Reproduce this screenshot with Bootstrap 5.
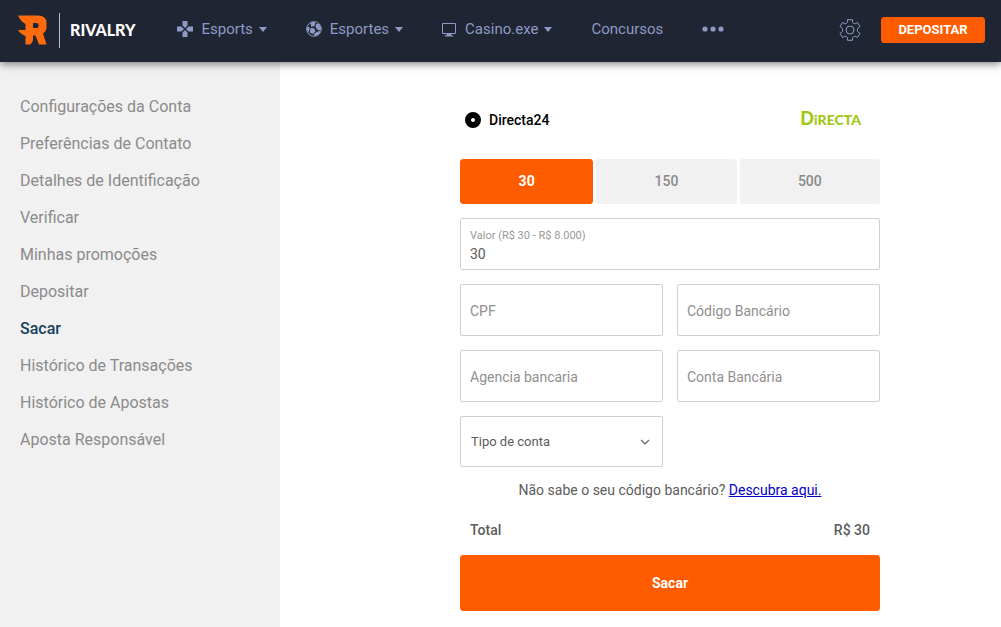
<!DOCTYPE html>
<html lang="pt-BR">
<head>
<meta charset="utf-8">
<meta name="viewport" content="width=device-width, initial-scale=1">
<title>Rivalry - Sacar</title>
<link href="https://cdn.jsdelivr.net/npm/bootstrap@5.3.0/dist/css/bootstrap.min.css" rel="stylesheet">
<style>
  :root { --orange: #ff5c00; --navy: #1f2532; --periwinkle: #8e9ac4; }
  body { font-family: Roboto, "Liberation Sans", sans-serif; font-size: 14px; line-height: 20px; color: #5c5c5c; background: #fff; }

  .topbar { background: var(--navy); height: 62px; padding: 0 16px 2px 18px; box-shadow: 0 2px 8px rgba(0,0,0,.5); z-index: 2; }
  .brand-name { font-family: Lato, sans-serif; font-weight: 900; font-size: 16px; color: #fff; }
  .brand-rule { width: 1px; height: 35px; background: #b9bdc9; margin: 0 10px 0 11px; }
  .menu { gap: 39px; margin-left: 42px; padding-bottom: 2px; }
  .menu .nav-link { color: var(--periwinkle); font-size: 15px; padding: 0; gap: 8px; }
  .menu .dropdown-toggle::after { border-top: 5px solid; border-right: 4px solid transparent; border-left: 4px solid transparent; margin: 1px 0 0 -2px; }
  .gear { color: var(--periwinkle); }
  .btn-orange { --bs-btn-bg: var(--orange); --bs-btn-border-color: var(--orange); --bs-btn-color: #fff; --bs-btn-hover-bg: #e65300; --bs-btn-hover-color: #fff; --bs-btn-border-radius: 3px; font-weight: 700; }
  .btn-deposit { font-size: 13px; line-height: 24px; width: 104px; padding: 0; margin-left: 20px; }

  .sidebar { width: 280px; background: #f1f1f1; padding: 26px 20px; }
  .sidebar .nav-link { padding: 0; font-size: 16px; line-height: 37px; color: #8b8b8b; }
  .sidebar .nav-link.active { color: #16405b; font-weight: 500; }

  main { padding: 48px 0 16px 59px; }
  .withdraw { max-width: 420px; width: 100%; }
  .method { height: 20px; padding: 0 19px 0 5px; margin-bottom: 29px; color: #000; }
  .method .form-check-input { width: 16px; height: 16px; margin: 0; border: 6px solid #000; background: #fff none; }
  .method-logo { font-family: Lato, sans-serif; font-weight: 900; font-size: 14px; color: #a0c814; padding-bottom: 2px; }
  .method-logo span { font-size: 18px; }

  .amounts { display: grid; grid-template-columns: 19fr 20fr 20fr; gap: 3px; }
  .amounts .btn { height: 45px; padding: 0; font-size: 14px; border-radius: 3px; }
  .btn-amount { background: #f1f1f1; color: #8b8b8b; font-weight: 500; }

  .stack { gap: 14px; }
  .fields { display: grid; grid-template-columns: 1fr 1fr; gap: 14px; }
  .field-wide { grid-column: 1 / -1; }
  .fields .form-control, .fields .form-select { height: 52px; min-height: 0; border: 1px solid #d0d0d0; border-radius: 2px; color: #5c5c5c; padding: 20px 9px 0; font-size: 14px; line-height: 20px; }
  .fields .form-floating > .form-control:not(:placeholder-shown) { padding: 20px 9px 0; }
  .fields .form-floating > label { padding: 17px 10px 0; height: 52px; font-size: 14px; line-height: 20px; color: #8f8f8f; border: 0; }
  .fields .form-floating > .form-control:focus ~ label,
  .fields .form-floating > .form-control:not(:placeholder-shown) ~ label { transform: none; font-size: 11px; padding-top: 8px; opacity: 1; color: #999; }
  .fields .form-select { height: 51px; padding: 0 30px 0 10px; font-size: 13px; background-position: right 12px center; background-size: 10px;
    background-image: url("data:image/svg+xml,%3Csvg xmlns='http://www.w3.org/2000/svg' viewBox='0 0 10 10'%3E%3Cpath d='M1 3l4 4 4-4' fill='none' stroke='%23666' stroke-width='1.2'/%3E%3C/svg%3E"); }
  .hint { margin: -1px 0 0; }
  .hint a { color: #0000c8; }
  .total { padding: 0 10px; margin: 6px 0 1px; font-weight: 500; }
  .btn-submit { height: 56px; font-size: 14px; }
</style>
</head>
<body class="d-flex flex-column min-vh-100">

<header class="topbar d-flex align-items-center position-relative">
  <a href="#" class="d-flex align-items-center text-decoration-none" aria-label="Rivalry">
    <svg width="30" height="31" viewBox="0 0 30 31" aria-hidden="true">
      <path fill="#ff6a0c" fill-rule="evenodd" d="M0 0.500H20Q28.500 0.500 28.500 8V12Q28.500 16.500 25 18.500L28.500 29.500H21L17.500 20.500H15V25.500L12.500 29.500H7.500V21Q3 19.500 0 15H7.500V9Q2.500 6.500 0 .5ZM15 8V13H18.500Q20.500 13 20.500 11.500V9.500Q20.500 8 18.500 8Z"/>
    </svg>
    <span class="brand-rule"></span>
    <span class="brand-name">RIVALRY</span>
  </a>

  <nav class="menu d-flex align-items-center" aria-label="Principal">
    <a href="#" class="nav-link dropdown-toggle d-flex align-items-center">
      <svg width="16" height="16" viewBox="0 0 16 16" fill="currentColor" aria-hidden="true">
        <path d="M5.500 0h5v4.500L8 7 5.500 4.500zM5.500 16h5v-4.500L8 9l-2.500 2.500zM0 5.500v5h4.500L7 8 4.500 5.500zM16 5.500v5h-4.500L9 8l2.500-2.500z"/>
      </svg>
      Esports
    </a>
    <a href="#" class="nav-link dropdown-toggle d-flex align-items-center">
      <svg width="16" height="16" viewBox="0 0 16 16" aria-hidden="true">
        <circle cx="8" cy="8" r="7.300" fill="none" stroke="currentColor"/>
        <path fill="currentColor" d="M4.500 7l3.800.3 1.200 3-2.300 2.700-3.500-1.200zM4.500 1.500l3.500-.8 1.500 1.500-1.300 3-3.200.6zM10.200 3l3-.3 2.300 4.500-1.500 2.500-3.200-1.400-1.400-2.800zM.5 6l2.500 0 .8.800-.7 3.400-1.500 1zM10.500 11l2.900-1 .8 1-2 3-3.700 1-.8-1.800z"/>
      </svg>
      Esportes
    </a>
    <a href="#" class="nav-link dropdown-toggle d-flex align-items-center">
      <svg width="15" height="15" viewBox="0 0 15 15" aria-hidden="true">
        <path fill="none" stroke="currentColor" d="M.5 1.500h13v10H.5z"/>
        <path fill="currentColor" d="M4.500 11.500h5v2H11.500v1h-9v-1h2z"/>
      </svg>
      Casino.exe
    </a>
    <a href="#" class="nav-link">Concursos</a>
    <a href="#" class="nav-link d-flex" aria-label="Mais">
      <svg width="22" height="6" viewBox="0 0 22 6" fill="currentColor" aria-hidden="true"><circle cx="3" cy="3" r="2.600"/><circle cx="11" cy="3" r="2.600"/><circle cx="19" cy="3" r="2.600"/></svg>
    </a>
  </nav>

  <a href="#" class="gear d-flex ms-auto" aria-label="Configurações">
    <svg width="22" height="22" viewBox="0 0 22 22" fill="none" stroke="currentColor" stroke-linejoin="round" aria-hidden="true">
      <circle cx="11" cy="11" r="4"/>
      <path d="M8.500 .7h5v2.100q0 1 .9 1.400l.8.400q.8.400 1.600-.1l1.700-1 2.500 4.200-1.700 1q-.8.500-.8 1.400v1.800q0 .9.800 1.400l1.700 1-2.500 4.200-1.700-1q-.8-.5-1.600-.1l-.8.400q-.9.400-.9 1.400v2.100h-5v-2.100q0-1-.9-1.400l-.8-.4q-.8-.4-1.600.1l-1.700 1L1 14.300l1.700-1q.8-.5.800-1.400v-1.800q0-.9-.8-1.400L1 7.700l2.500-4.200 1.700 1q.8.500 1.600.1l.8-.4q.9-.4.900-1.400z"/>
    </svg>
  </a>
  <button type="button" class="btn btn-orange btn-deposit">DEPOSITAR</button>
</header>

<div class="d-flex flex-grow-1">
  <aside class="sidebar flex-shrink-0">
    <nav class="nav flex-column" aria-label="Conta">
      <a class="nav-link" href="#">Configurações da Conta</a>
      <a class="nav-link" href="#">Preferências de Contato</a>
      <a class="nav-link" href="#">Detalhes de Identificação</a>
      <a class="nav-link" href="#">Verificar</a>
      <a class="nav-link" href="#">Minhas promoções</a>
      <a class="nav-link" href="#">Depositar</a>
      <a class="nav-link active" aria-current="page" href="#">Sacar</a>
      <a class="nav-link" href="#">Histórico de Transações</a>
      <a class="nav-link" href="#">Histórico de Apostas</a>
      <a class="nav-link" href="#">Aposta Responsável</a>
    </nav>
  </aside>

  <main class="flex-grow-1">
    <form class="withdraw mx-auto">
      <div class="method d-flex align-items-center justify-content-between">
        <div class="d-flex align-items-center">
          <input class="form-check-input" type="radio" name="method" id="directa" checked>
          <label class="fw-medium ps-2" for="directa">Directa24</label>
        </div>
        <div class="method-logo"><span>D</span>iRECTA</div>
      </div>

      <div class="stack d-flex flex-column">
        <div class="amounts">
          <button type="button" class="btn btn-orange">30</button>
          <button type="button" class="btn btn-amount">150</button>
          <button type="button" class="btn btn-amount">500</button>
        </div>

        <div class="fields">
          <div class="form-floating field-wide">
            <input type="text" class="form-control" id="valor" value="30" placeholder=" ">
            <label for="valor">Valor (R$ 30 - R$ 8.000)</label>
          </div>
          <div class="form-floating">
            <input type="text" class="form-control" id="cpf" placeholder=" ">
            <label for="cpf">CPF</label>
          </div>
          <div class="form-floating">
            <input type="text" class="form-control" id="codigo" placeholder=" ">
            <label for="codigo">Código Bancário</label>
          </div>
          <div class="form-floating">
            <input type="text" class="form-control" id="agencia" placeholder=" ">
            <label for="agencia">Agencia bancaria</label>
          </div>
          <div class="form-floating">
            <input type="text" class="form-control" id="conta" placeholder=" ">
            <label for="conta">Conta Bancária</label>
          </div>
          <select class="form-select" aria-label="Tipo de conta">
            <option>Tipo de conta</option>
          </select>
        </div>

        <p class="hint text-center">Não sabe o seu código bancário? <a href="#">Descubra aqui.</a></p>

        <div class="total d-flex justify-content-between"><span>Total</span><span>R$ 30</span></div>

        <button type="submit" class="btn btn-orange btn-submit w-100">Sacar</button>
      </div>
    </form>
  </main>
</div>

<script src="https://cdn.jsdelivr.net/npm/bootstrap@5.3.0/dist/js/bootstrap.bundle.min.js"></script>
</body>
</html>
